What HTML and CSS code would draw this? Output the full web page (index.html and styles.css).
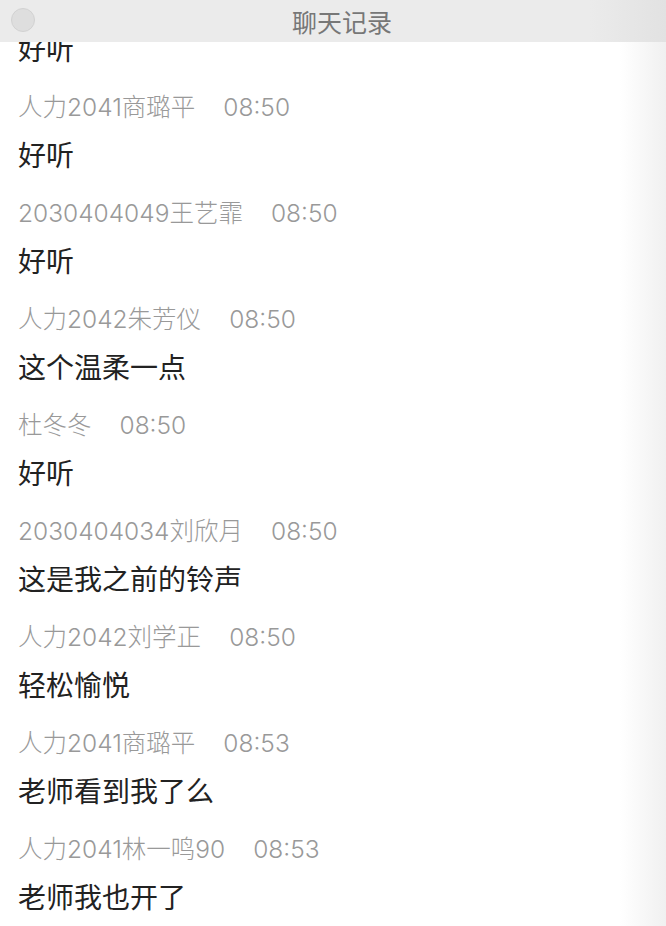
FILE: index.html
```html
<!DOCTYPE html>
<html lang="zh-CN">
<head>
  <meta charset="UTF-8">
  <meta name="viewport" content="width=device-width, initial-scale=1.0">
  <title>聊天记录</title>
  <link rel="stylesheet" href="styles.css">
</head>
<body>
  <!-- Title bar, stays over the scrolled list -->
  <div class="title-bar">
    <span class="close-dot" aria-hidden="true"></span>
    <h1 class="title">聊天记录</h1>
  </div>

  <!-- Message list -->
  <div class="chat-log">
    <div class="entry entry-cut">
      <p class="msg">好听</p>
    </div>
    <div class="entry">
      <div class="meta"><span class="name">人力2041商璐平</span><span class="time">08:50</span></div>
      <p class="msg">好听</p>
    </div>
    <div class="entry">
      <div class="meta"><span class="name">2030404049王艺霏</span><span class="time">08:50</span></div>
      <p class="msg">好听</p>
    </div>
    <div class="entry">
      <div class="meta"><span class="name">人力2042朱芳仪</span><span class="time">08:50</span></div>
      <p class="msg">这个温柔一点</p>
    </div>
    <div class="entry">
      <div class="meta"><span class="name">杜冬冬</span><span class="time">08:50</span></div>
      <p class="msg">好听</p>
    </div>
    <div class="entry">
      <div class="meta"><span class="name">2030404034刘欣月</span><span class="time">08:50</span></div>
      <p class="msg">这是我之前的铃声</p>
    </div>
    <div class="entry">
      <div class="meta"><span class="name">人力2042刘学正</span><span class="time">08:50</span></div>
      <p class="msg">轻松愉悦</p>
    </div>
    <div class="entry">
      <div class="meta"><span class="name">人力2041商璐平</span><span class="time">08:53</span></div>
      <p class="msg">老师看到我了么</p>
    </div>
    <div class="entry">
      <div class="meta"><span class="name">人力2041林一鸣90</span><span class="time">08:53</span></div>
      <p class="msg">老师我也开了</p>
    </div>
  </div>
</body>
</html>
```

FILE: styles.css
```css
/* Basic Reset */
* {
  margin: 0;
  padding: 0;
  box-sizing: border-box;
}

html, body {
  height: 100%;
  overflow: hidden;
}

body {
  font-family: "Noto Sans CJK SC", "Noto Sans", sans-serif;
  background: linear-gradient(to right, #ffffff 0, #ffffff 620px, #f0f0f0 666px);
  color: #222;
}

/* Title Bar */
.title-bar {
  position: fixed;
  top: 0;
  left: 0;
  right: 0;
  height: 42px;
  display: flex;
  align-items: center;
  justify-content: center;
  padding-left: 18px;
  background: linear-gradient(to right, #ebebeb 0, #ebebeb 590px, #e2e2e2 666px);
  z-index: 10;
}

.close-dot {
  position: absolute;
  left: 11px;
  top: 8px;
  width: 24px;
  height: 24px;
  border-radius: 50%;
  background-color: #dedede;
  border: 1px solid #d2d2d2;
}

.title {
  font-size: 25px;
  font-weight: 400;
  color: #777;
  line-height: 42px;
}

/* Chat Log */
.chat-log {
  padding: 24px 18px 0;
}

.entry {
  margin-bottom: 8px;
}

.meta {
  height: 49px;
  padding-top: 4px;
  line-height: 45px;
  font-family: Inter, "Noto Sans CJK SC", sans-serif;
  font-size: 24.5px;
  font-weight: 300;
  color: #999;
  white-space: nowrap;
}

.name {
  margin-right: 28px;
}

.msg {
  height: 49px;
  line-height: 49px;
  font-size: 28px;
  color: #222;
}
```
